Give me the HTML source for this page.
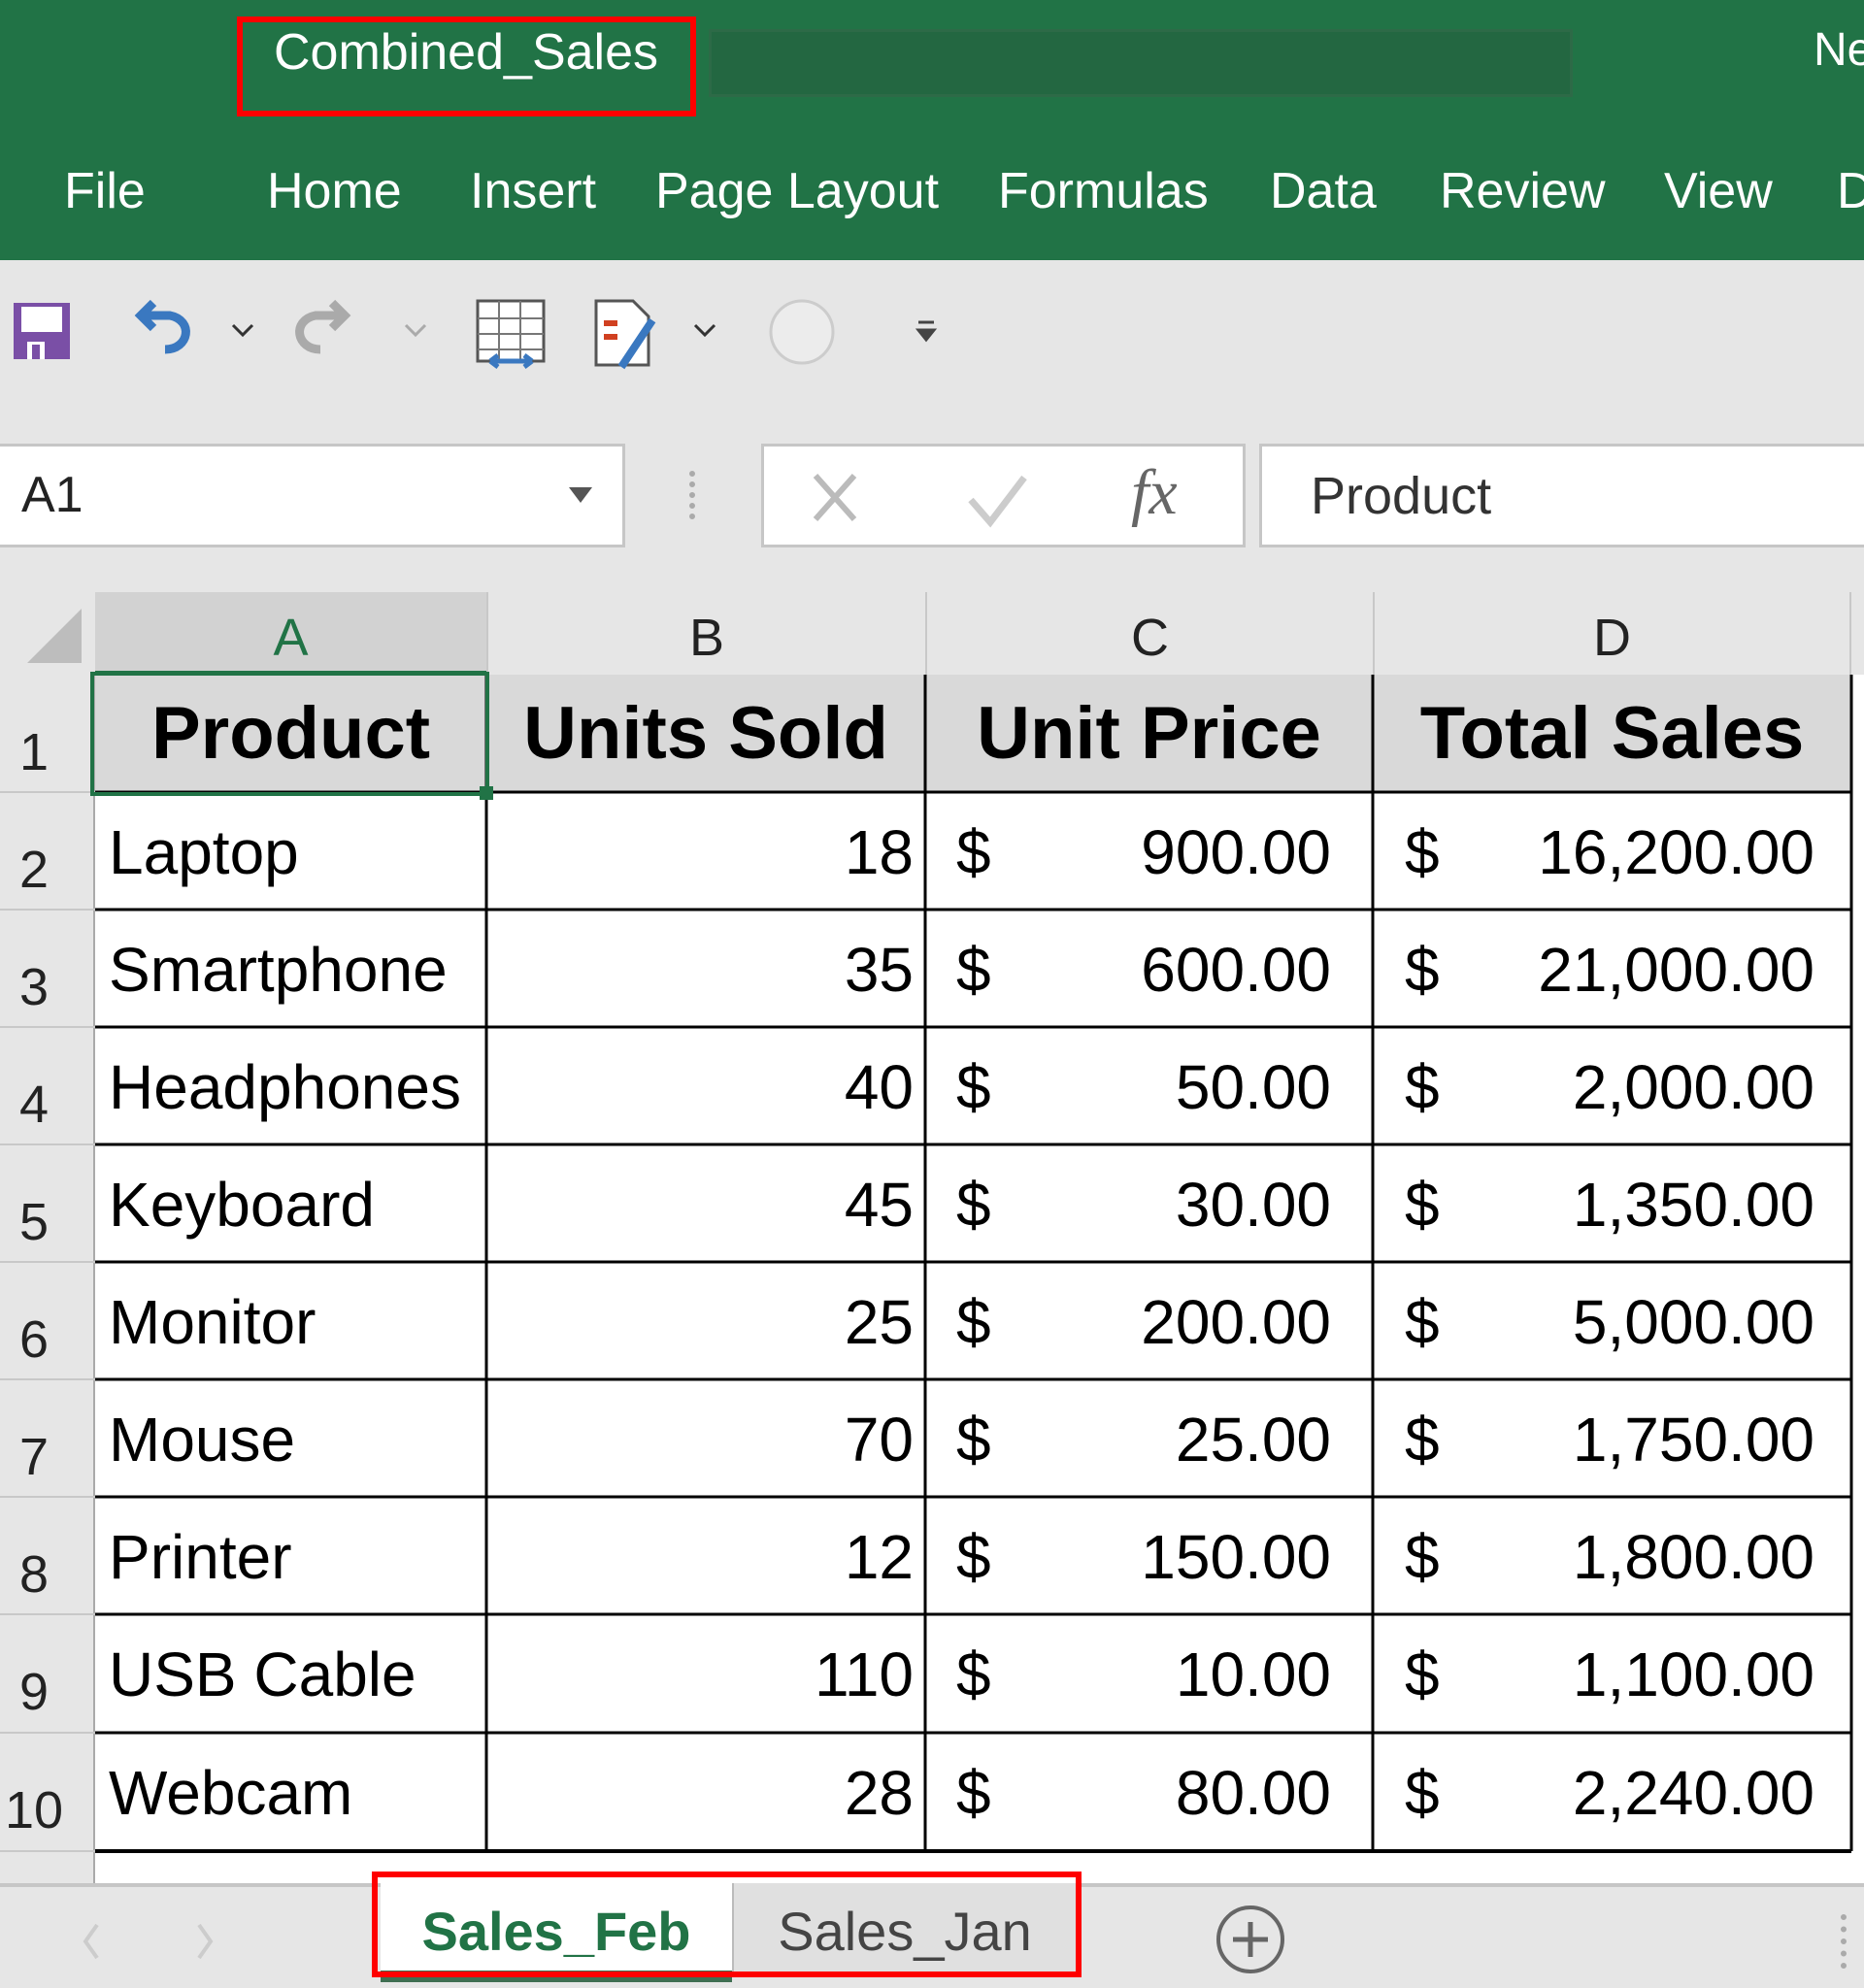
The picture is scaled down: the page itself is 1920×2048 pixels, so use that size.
<!DOCTYPE html>
<html><head><meta charset="utf-8"><style>
*{margin:0;padding:0;box-sizing:border-box}
body{width:1920px;height:2048px;position:relative;overflow:hidden;background:#e6e6e6;font-family:"Liberation Sans",sans-serif}
.a{position:absolute}
.tab{position:absolute;top:162px;color:#fff;font-size:52px;line-height:70px;white-space:nowrap}
.cell{position:absolute;font-size:64px;line-height:121px;color:#000;white-space:nowrap}
.rn{position:absolute;left:0;width:70px;font-size:54px;color:#222;text-align:center}
.ch{position:absolute;top:610px;height:85px;font-size:54px;line-height:95px;text-align:center;color:#222}
</style></head><body>
<div class="a" style="left:0;top:0;width:1920px;height:268px;background:#217346"></div>
<div class="a" style="left:730px;top:30px;width:890px;height:70px;background:#236741;border:3px solid #2d6a47"></div>
<div class="a" style="left:244px;top:17px;width:473px;height:103px;border:6px solid #f00"></div>
<div class="a" style="left:282px;top:24px;color:#fff;font-size:52px;line-height:60px">Combined_Sales</div>
<div class="a" style="left:1868px;top:22px;color:#fff;font-size:48px;line-height:60px">Ne</div>
<div class="tab" style="left:66px">File</div>
<div class="tab" style="left:275px">Home</div>
<div class="tab" style="left:484px">Insert</div>
<div class="tab" style="left:675px">Page Layout</div>
<div class="tab" style="left:1028px">Formulas</div>
<div class="tab" style="left:1308px">Data</div>
<div class="tab" style="left:1483px">Review</div>
<div class="tab" style="left:1714px">View</div>
<div class="tab" style="left:1892px">D</div>
<svg class="a" style="left:0;top:290px" width="1000" height="110" viewBox="0 0 1000 110">
<rect x="14" y="22" width="58" height="58" fill="#7a4fa6"/><rect x="22" y="26" width="42" height="26" fill="#fff"/><rect x="28" y="62" width="18" height="18" fill="#fff"/><rect x="33" y="65" width="8" height="15" fill="#7a4fa6"/>
<path d="M170 70 C195 70 200 40 175 35 L150 35 M158 22 L145 35 L158 48" stroke="#3a78c0" stroke-width="9" fill="none"/>
<path d="M240 45 l10 10 l10-10" stroke="#333" stroke-width="3" fill="none"/>
<path d="M330 70 C305 70 300 40 325 35 L350 35 M342 22 L355 35 L342 48" stroke="#aaa" stroke-width="9" fill="none"/>
<path d="M418 45 l10 10 l10-10" stroke="#aaa" stroke-width="3" fill="none"/>
<rect x="492" y="20" width="68" height="62" fill="#fff" stroke="#555" stroke-width="3"/><path d="M492 38 H560 M492 54 H560 M492 70 H560 M514 20 V82 M536 20 V82" stroke="#777" stroke-width="2"/><path d="M505 82 H548 M505 82 l8-6 M505 82 l8 6 M548 82 l-8-6 M548 82 l-8 6" stroke="#3a78c0" stroke-width="5" fill="none"/>
<path d="M614 20 H652 L668 36 V86 H614 Z" fill="#fff" stroke="#555" stroke-width="3"/><rect x="622" y="40" width="14" height="6" fill="#d04020"/><rect x="622" y="54" width="14" height="6" fill="#d04020"/><path d="M672 40 L640 88" stroke="#3a78c0" stroke-width="8"/>
<path d="M716 45 l10 10 l10-10" stroke="#333" stroke-width="3" fill="none"/>
<circle cx="826" cy="52" r="32" fill="#ececec" stroke="#ccc" stroke-width="3"/>
<path d="M946 42 H962 M946 50 H962 l-8 10 z" stroke="#444" stroke-width="3" fill="#444"/>
</svg>
<div class="a" style="left:0;top:457px;width:644px;height:107px;background:#fff;border:3px solid #c6c6c6;border-left:none"></div>
<div class="a" style="left:22px;top:480px;font-size:52px;color:#222">A1</div>
<svg class="a" style="left:584px;top:500px" width="30" height="20"><path d="M2 2 H26 L14 18 Z" fill="#555"/></svg>
<div class="a" style="left:710px;top:485px;width:6px;height:50px;border-left:6px dotted #aaa"></div>
<div class="a" style="left:784px;top:457px;width:499px;height:107px;background:#fff;border:3px solid #c6c6c6"></div>
<svg class="a" style="left:830px;top:480px" width="400" height="70"><path d="M10 10 L50 55 M50 10 L10 55" stroke="#bbb" stroke-width="6"/><path d="M170 35 L190 58 L225 12" stroke="#ccc" stroke-width="7" fill="none"/></svg>
<div class="a" style="left:1165px;top:470px;font-family:'Liberation Serif',serif;font-style:italic;font-size:66px;color:#666">fx</div>
<div class="a" style="left:1297px;top:457px;width:623px;height:107px;background:#fff;border:3px solid #c6c6c6;border-right:none"></div>
<div class="a" style="left:1350px;top:480px;font-size:54px;color:#333">Product</div>
<div class="a" style="left:0;top:610px;width:1920px;height:1330px;background:#e6e6e6"></div>
<svg class="a" style="left:20px;top:625px" width="70" height="60"><path d="M64 2 V58 H8 Z" fill="#bdbdbd"/></svg>
<div class="ch" style="left:98px;width:403px;background:#d2d2d2;color:#217346;border-bottom:4px solid #217346">A</div>
<div class="ch" style="left:501px;width:452px;border-left:2px solid #c8c8c8">B</div>
<div class="ch" style="left:953px;width:461px;border-left:2px solid #c8c8c8">C</div>
<div class="ch" style="left:1414px;width:493px;border-left:2px solid #c8c8c8;border-right:2px solid #c8c8c8">D</div>
<div class="a" style="left:98px;top:695px;width:1822px;height:1245px;background:#fff"></div>
<div class="a" style="left:98px;top:695px;width:1809px;height:121px;background:#d9d9d9"></div>
<div class="a" style="left:96px;top:695px;width:2px;height:1245px;background:#aaa"></div>
<svg class="a" style="left:0;top:0" width="1920" height="2048">
<g stroke="#000" stroke-width="3">
<line x1="98" y1="816" x2="1907" y2="816"/><line x1="98" y1="937" x2="1907" y2="937"/><line x1="98" y1="1058" x2="1907" y2="1058"/><line x1="98" y1="1179" x2="1907" y2="1179"/><line x1="98" y1="1300" x2="1907" y2="1300"/><line x1="98" y1="1421" x2="1907" y2="1421"/><line x1="98" y1="1542" x2="1907" y2="1542"/><line x1="98" y1="1663" x2="1907" y2="1663"/><line x1="98" y1="1785" x2="1907" y2="1785"/><line x1="98" y1="1907" x2="1907" y2="1907" stroke-width="4"/>
<line x1="501" y1="695" x2="501" y2="1907"/><line x1="953" y1="695" x2="953" y2="1907"/><line x1="1414" y1="695" x2="1414" y2="1907"/><line x1="1907" y1="695" x2="1907" y2="1907"/>
</g>
<g stroke="#c8c8c8" stroke-width="2"><line x1="0" y1="816" x2="98" y2="816"/><line x1="0" y1="937" x2="98" y2="937"/><line x1="0" y1="1058" x2="98" y2="1058"/><line x1="0" y1="1179" x2="98" y2="1179"/><line x1="0" y1="1300" x2="98" y2="1300"/><line x1="0" y1="1421" x2="98" y2="1421"/><line x1="0" y1="1542" x2="98" y2="1542"/><line x1="0" y1="1663" x2="98" y2="1663"/><line x1="0" y1="1785" x2="98" y2="1785"/><line x1="0" y1="1907" x2="98" y2="1907"/></g>
<rect x="95" y="694" width="407" height="124" fill="none" stroke="#217346" stroke-width="4"/><rect x="494" y="810" width="14" height="14" fill="#217346"/>
</svg>
<div class="rn" style="top:744px">1</div><div class="rn" style="top:865px">2</div><div class="rn" style="top:986px">3</div><div class="rn" style="top:1107px">4</div><div class="rn" style="top:1228px">5</div><div class="rn" style="top:1349px">6</div><div class="rn" style="top:1470px">7</div><div class="rn" style="top:1591px">8</div><div class="rn" style="top:1712px">9</div><div class="rn" style="top:1834px">10</div>
<div class="cell" style="left:98px;width:403px;top:695px;text-align:center;font-weight:bold;font-size:76px">Product</div>
<div class="cell" style="left:501px;width:452px;top:695px;text-align:center;font-weight:bold;font-size:76px">Units Sold</div>
<div class="cell" style="left:953px;width:461px;top:695px;text-align:center;font-weight:bold;font-size:76px">Unit Price</div>
<div class="cell" style="left:1414px;width:493px;top:695px;text-align:center;font-weight:bold;font-size:76px">Total Sales</div>
<div id="rows"></div>
<script>
var d=[["Laptop",18,"900.00","16,200.00"],["Smartphone",35,"600.00","21,000.00"],["Headphones",40,"50.00","2,000.00"],["Keyboard",45,"30.00","1,350.00"],["Monitor",25,"200.00","5,000.00"],["Mouse",70,"25.00","1,750.00"],["Printer",12,"150.00","1,800.00"],["USB Cable",110,"10.00","1,100.00"],["Webcam",28,"80.00","2,240.00"]];
var h="";var tops=[816,937,1058,1179,1300,1421,1542,1663,1785];
d.forEach(function(r,i){var t=tops[i]+2;
h+='<div class="cell" style="left:112px;top:'+t+'px">'+r[0]+'</div>';
h+='<div class="cell" style="left:501px;width:440px;text-align:right;top:'+t+'px">'+r[1]+'</div>';
h+='<div class="cell" style="left:985px;top:'+t+'px">$</div>';
h+='<div class="cell" style="left:953px;width:418px;text-align:right;top:'+t+'px">'+r[2]+'</div>';
h+='<div class="cell" style="left:1447px;top:'+t+'px">$</div>';
h+='<div class="cell" style="left:1414px;width:455px;text-align:right;top:'+t+'px">'+r[3]+'</div>';});
document.getElementById("rows").innerHTML=h;
</script>
<div class="a" style="left:0;top:1940px;width:1920px;height:108px;background:#e6e6e6;border-top:4px solid #c6c6c6"></div>
<svg class="a" style="left:80px;top:1975px" width="160" height="50"><path d="M20 8 L8 25 L20 42" fill="none" stroke="#ccc" stroke-width="4"/><path d="M125 8 L137 25 L125 42" fill="none" stroke="#ccc" stroke-width="4"/></svg>
<div class="a" style="left:392px;top:1940px;width:362px;height:100px;background:#fff"></div>
<div class="a" style="left:392px;top:2030px;width:362px;height:12px;background:#3f6f52"></div>
<div class="a" style="left:754px;top:1940px;width:356px;height:95px;background:#e0e0e0;border-left:2px solid #bbb"></div>
<div class="a" style="left:392px;top:1957px;width:362px;text-align:center;font-size:56px;font-weight:bold;color:#217346">Sales_Feb</div>
<div class="a" style="left:754px;top:1957px;width:356px;text-align:center;font-size:56px;color:#444">Sales_Jan</div>
<div class="a" style="left:383px;top:1928px;width:731px;height:109px;border:6px solid #f00"></div>
<svg class="a" style="left:1250px;top:1960px" width="80" height="80"><circle cx="38" cy="38" r="33" fill="none" stroke="#666" stroke-width="4"/><path d="M38 20 V56 M20 38 H56" stroke="#666" stroke-width="5"/></svg>
<div class="a" style="left:1896px;top:1972px;width:6px;height:56px;border-left:6px dotted #aaa"></div>
</body></html>
